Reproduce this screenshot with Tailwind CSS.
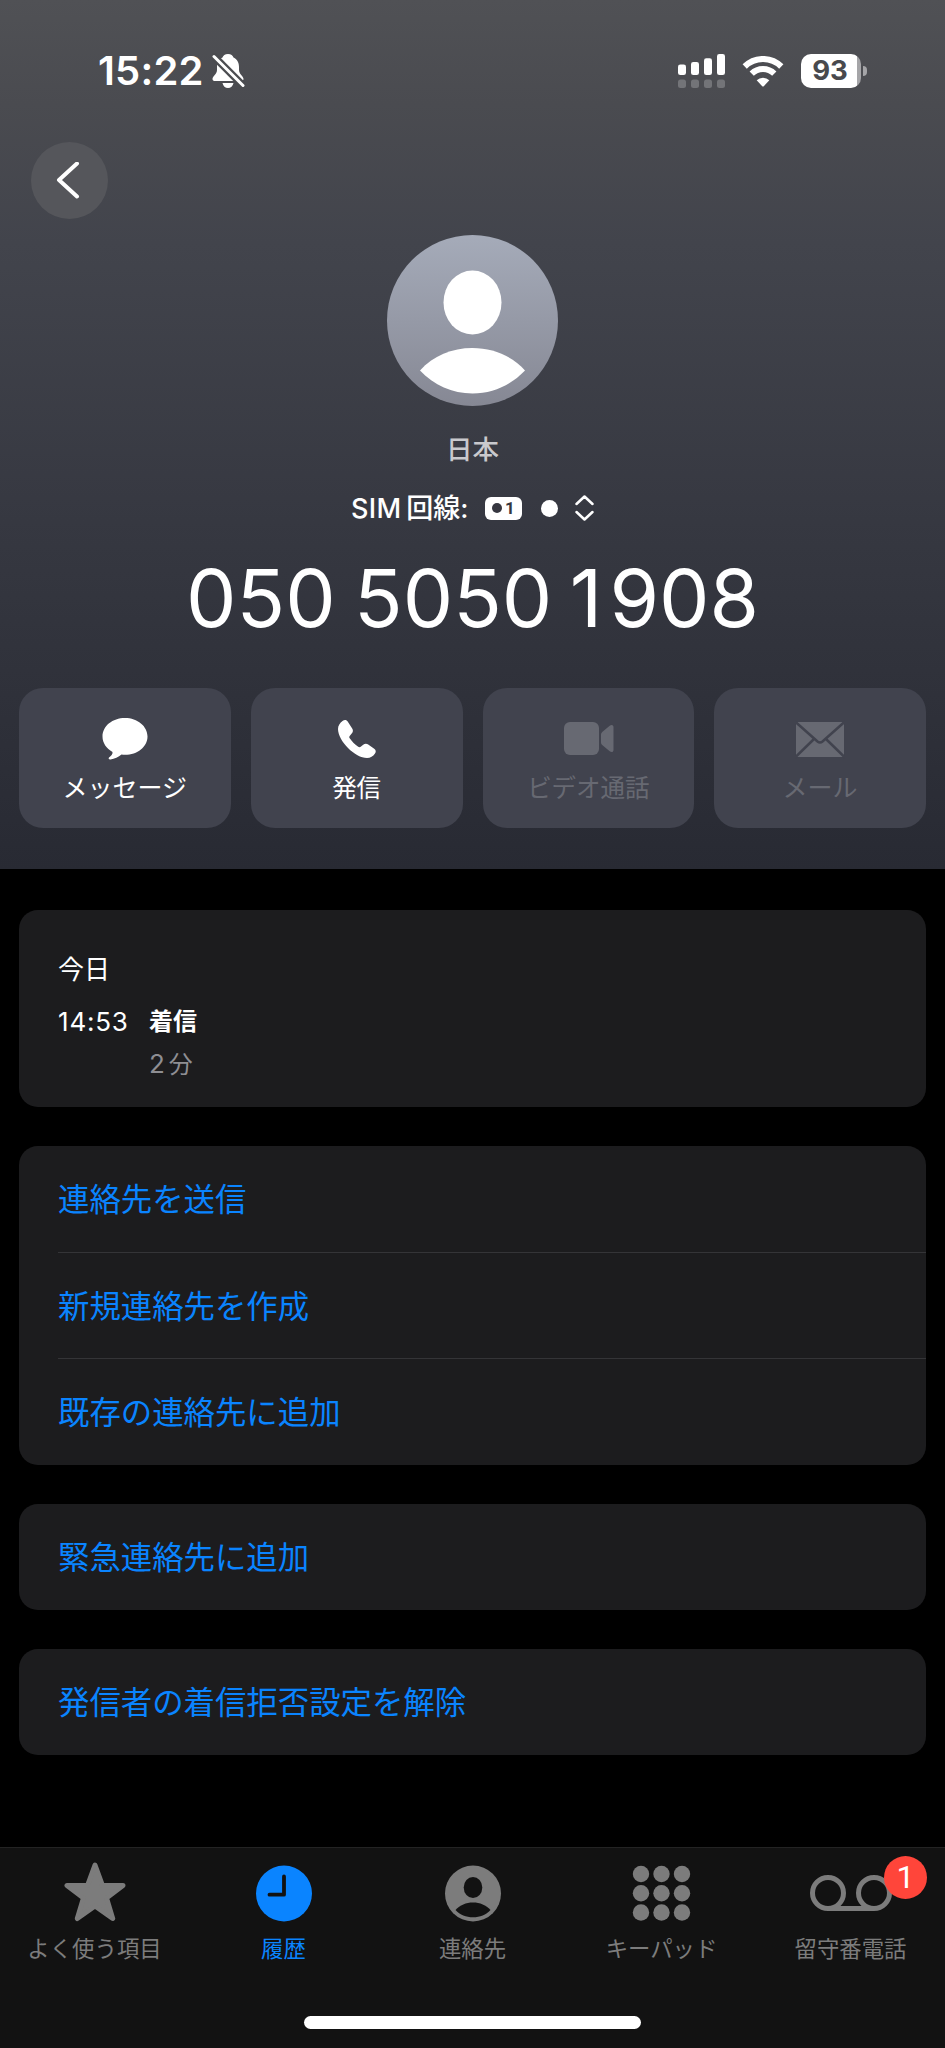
<!DOCTYPE html>
<html lang="ja">
<head>
    <meta charset="UTF-8">
    <meta name="viewport" content="width=device-width, initial-scale=1.0">
    <title>履歴</title>
    <script src="https://cdn.jsdelivr.net/npm/@tailwindcss/browser@4"></script>
</head>
<body class="bg-black text-white font-['Inter','Noto_Sans_CJK_JP',sans-serif]">
<div class="w-[945px] h-[2048px] flex flex-col overflow-hidden">

    <!-- ヘッダー -->
    <header class="h-[869px] shrink-0 flex flex-col bg-[linear-gradient(to_bottom,#505155_0%,#4a4b50_12%,#42444c_28%,#363841_60%,#282a33_100%)]">
        <!-- ステータスバー -->
        <div class="h-[142px] shrink-0 flex items-center justify-between pl-[98px] pr-[78px]">
            <div class="flex items-center gap-[8px]">
                <span class="w-[106px] text-[40px] leading-none font-semibold tracking-[0.200px] whitespace-nowrap">15:22</span>
                <svg class="w-[33px] h-[36px]" viewBox="0 0 33 36" fill="none">
                    <path fill="#fff" d="M16 1c-3 0-5 1.700-5.500 3.500C6.500 6.500 5 10 5 14v3c0 4-4.500 6.500-4.500 9 0 1.300.8 2 2 2h27c1.200 0 2-.7 2-2 0-2.500-4.500-5-4.500-9v-3c0-4-1.500-7.500-5.500-9.500C21 2.700 19 1 16 1ZM10.500 30h11c-.6 3-2.700 5-5.500 5s-4.900-2-5.500-5Z"/>
                    <path stroke="#4b4c50" stroke-width="7.500" d="M-1 .5 34 35.500"/>
                    <path stroke="#fff" stroke-width="3" stroke-linecap="round" d="m2 3.500 29 29"/>
                </svg>
            </div>
            <div class="flex items-center">
                <svg class="w-[48px] h-[34px]" viewBox="0 0 48 34">
                    <g fill="#fff">
                        <rect x="0" y="10.500" width="8" height="10.500" rx="2.300"/>
                        <rect x="13" y="8" width="8" height="13" rx="2.300"/>
                        <rect x="26" y="4.300" width="8" height="16.700" rx="2.300"/>
                        <rect x="39" y="0" width="8" height="21" rx="2.300"/>
                    </g>
                    <g fill="#737478">
                        <rect x="0" y="25.500" width="8" height="8.500" rx="2.500"/>
                        <rect x="13" y="25.500" width="8" height="8.500" rx="2.500"/>
                        <rect x="26" y="25.500" width="8" height="8.500" rx="2.500"/>
                        <rect x="39" y="25.500" width="8" height="8.500" rx="2.500"/>
                    </g>
                </svg>
                <svg class="ml-[16px] w-[42px] h-[31px]" viewBox="0 0 42 31" fill="none">
                    <path stroke="#fff" stroke-width="6" d="M2.700 10.500a26 26 0 0 1 36.600 0"/>
                    <path stroke="#fff" stroke-width="6" d="M9.700 17.700a16 16 0 0 1 22.600 0"/>
                    <path fill="#fff" d="M14.700 24.300a9 9 0 0 1 12.600 0L22 29.900q-1 1-2 0Z"/>
                </svg>
                <div class="ml-[17px] w-[60px] h-[34px] rounded-[10px] bg-linear-to-r from-white from-[93%] to-[#a5a5a8] to-[93%] flex items-center justify-center text-[27.500px] leading-none font-bold text-[#48494d] pr-[2px]">93</div>
                <div class="ml-[2px] w-[4px] h-[10px] rounded-r-full bg-[#a5a5a8]"></div>
            </div>
        </div>

        <!-- 戻るボタン -->
        <button class="ml-[31px] size-[77px] shrink-0 rounded-full bg-[#55565b] flex items-center justify-center">
            <svg class="w-[24px] h-[38px] mr-[4px]" viewBox="0 0 24 38" fill="none" stroke="#fff" stroke-width="4" stroke-linecap="round" stroke-linejoin="round">
                <path d="M21 1.500 3 18l18 16.500"/>
            </svg>
        </button>

        <!-- 連絡先 -->
        <div class="mt-[16px] flex flex-col items-center">
            <svg class="size-[171px]" viewBox="0 0 171 171">
                <defs>
                    <linearGradient id="avatar" x1="0" y1="0" x2="0" y2="1">
                        <stop offset="0" stop-color="#a5abb9"/>
                        <stop offset="1" stop-color="#868894"/>
                    </linearGradient>
                </defs>
                <circle cx="85.500" cy="85.500" r="85.500" fill="url(#avatar)"/>
                <ellipse cx="85.500" cy="67.500" rx="29" ry="32" fill="#fff"/>
                <path fill="#fff" d="M33 135.500C46 121 65 113 85.500 113s39.500 8 52.500 22.500C124 150 106 158.500 85.500 158.500S47 150 33 135.500Z"/>
            </svg>
            <p class="mt-[23px] h-[40px] leading-[40px] text-[26.500px] font-medium text-[#c9c9cd]">日本</p>
            <div class="mt-[19px] h-[40px] flex items-center text-[27px] font-medium">
                <span class="w-[118px] leading-[41px] whitespace-nowrap"><span class="tracking-[0.300px]">SIM</span><span class="ml-[5px]">回線:</span></span>
                <span class="ml-[16px] w-[37px] h-[23px] rounded-[6px] bg-white flex items-center justify-center gap-[3px] font-[Roboto,sans-serif] text-[17px] leading-none font-bold text-[#363740]">
                    <span class="size-[10px] rounded-full bg-[#363740]"></span>1
                </span>
                <span class="ml-[19px] size-[17px] rounded-full bg-white"></span>
                <svg class="ml-[17px] w-[19px] h-[26px]" viewBox="0 0 19 26" fill="none" stroke="#fff" stroke-width="2.500" stroke-linecap="round" stroke-linejoin="round">
                    <path d="m1.500 9 8-7.500 8 7.500M1.500 17l8 7.500 8-7.500"/>
                </svg>
            </div>
            <p class="mt-[24px] h-[90px] leading-[91px] text-[80px] [word-spacing:-4px] whitespace-nowrap">050 5050 <span class="-ml-[1px] mr-[7px]">1</span>908</p>
        </div>

        <!-- アクション -->
        <div class="mt-[46px] px-[19px] grid grid-cols-4 gap-[20px] text-[25px]">
            <button class="h-[140px] rounded-[24px] bg-[#41434e] flex flex-col items-center pt-[28px]">
                <svg class="w-[46px] h-[46px]" viewBox="0 0 46 46" fill="#fff">
                    <path d="M23 2C10.500 2 .5 10 .5 20.500c0 6.500 4 12 10 15.500.5 2-1.500 4-3.500 5.500-1 1 0 2.300 1.500 2 4-.5 8-2.500 11-5 1.200.3 2.300.3 3.500.3 12.500 0 22.500-8 22.500-18.300S35.500 2 23 2Z"/>
                </svg>
                <span class="leading-[53px]">メッセージ</span>
            </button>
            <button class="h-[140px] rounded-[24px] bg-[#41434e] flex flex-col items-center pt-[28px]">
                <svg class="w-[46px] h-[46px]" viewBox="0 0 46 46" fill="#fff">
                    <path d="M8.500 5C6 7 4 9.500 4 13c0 6 4.500 13.500 10 19 6 6 13 10 19 10 3.500 0 6-1.700 8-4.500 1.200-1.700 1-3.500-.8-4.800l-6-4.200c-1.700-1.200-3.500-1-5 .3l-2.500 2c-.8.6-1.700.6-2.500 0-3-2-6.500-5.500-8.500-8.500-.6-.8-.5-1.700.2-2.500l2-2.500c1.200-1.500 1.400-3.200.3-4.900l-4.200-6.500C12.500 3.600 10.500 3.500 8.500 5Z"/>
                </svg>
                <span class="leading-[53px] text-[24.500px]">発信</span>
            </button>
            <button class="h-[140px] rounded-[24px] bg-[#41434e] text-[#676972] flex flex-col items-center pt-[28px]">
                <svg class="ml-[2px] w-[50px] h-[46px]" viewBox="0 0 50 46" fill="currentColor">
                    <rect x="0" y="6" width="35" height="33" rx="6"/>
                    <path d="M37 18.500q0-1.500 1.200-2.500l7.500-6.300C47.500 8.300 49.500 9 49.500 11v23c0 2-2 2.700-3.800 1.300L38.200 29Q37 28 37 26.500Z"/>
                </svg>
                <span class="leading-[53px] text-[24.500px]">ビデオ通話</span>
            </button>
            <button class="h-[140px] rounded-[24px] bg-[#41434e] text-[#676972] flex flex-col items-center pt-[28px]">
                <svg class="w-[50px] h-[46px]" viewBox="0 0 50 46">
                    <rect x="1" y="6" width="48" height="35" rx="2" fill="currentColor"/>
                    <path d="m0 5.500 22.500 20q2.500 2 5 0L50 5.500M0 41.500l18.500-18M50 41.500l-18.500-18" fill="none" stroke="#41434e" stroke-width="2.500"/>
                </svg>
                <span class="leading-[53px]">メール</span>
            </button>
        </div>
    </header>

    <!-- 本文 -->
    <main class="h-[978px] shrink-0 px-[19px] pt-[41px] flex flex-col gap-[39px]">
        <section class="h-[197px] rounded-[19px] bg-[#1c1c1e] pl-[39px] pt-[40px]">
            <h2 class="h-[40px] leading-[40px] text-[26px]">今日</h2>
            <div class="mt-[12px] flex text-[24px] leading-[40px]">
                <span class="w-[91px] text-[26px] tracking-[0.800px]">14:53</span>
                <div>
                    <p class="font-bold">着信</p>
                    <p class="mt-[2px] text-[#8e8e93]"><span class="text-[26px]">2</span><span class="ml-[4px]">分</span></p>
                </div>
            </div>
        </section>

        <section class="rounded-[19px] bg-[#1c1c1e] pl-[39px] text-[31.400px] text-[#0a84ff]">
            <div class="h-[107px] leading-[108px] border-b border-[#343437]">連絡先を送信</div>
            <div class="h-[106px] leading-[108px] border-b border-[#343437]">新規連絡先を作成</div>
            <div class="h-[106px] leading-[108px]">既存の連絡先に追加</div>
        </section>

        <section class="h-[106px] rounded-[19px] bg-[#1c1c1e] pl-[39px] text-[31.400px] leading-[108px] text-[#0a84ff]">緊急連絡先に追加</section>

        <section class="h-[106px] rounded-[19px] bg-[#1c1c1e] pl-[39px] text-[31.400px] leading-[108px] text-[#0a84ff]">発信者の着信拒否設定を解除</section>
    </main>

    <!-- タブバー -->
    <footer class="h-[201px] shrink-0 bg-[#121212] border-t border-[#232323] flex flex-col items-center">
        <nav class="w-full grid grid-cols-5 text-[22.400px] text-[#7c7c7c]">
            <a class="flex flex-col items-center pt-[14px]">
                <svg class="w-[64px] h-[62px]" viewBox="0 0 64 62" fill="currentColor" stroke="currentColor" stroke-width="5" stroke-linejoin="round">
                    <path d="m32 3 7.500 20.500H60L43.500 36l6.200 20.500L32 44 14.300 56.500 20.500 36 4 23.500h20.500Z"/>
                </svg>
                <span class="mt-[6px] leading-[38px]">よく使う項目</span>
            </a>
            <a class="flex flex-col items-center pt-[14px] text-[#0a84ff]">
                <svg class="w-[64px] h-[62px]" viewBox="0 0 64 62">
                    <circle cx="32" cy="31.500" r="28" fill="currentColor"/>
                    <path d="M32 14.500v18.200H17.500" fill="none" stroke="#121212" stroke-width="3.800" stroke-linecap="round" stroke-linejoin="round"/>
                </svg>
                <span class="mt-[6px] leading-[38px]">履歴</span>
            </a>
            <a class="flex flex-col items-center pt-[14px]">
                <svg class="w-[64px] h-[62px]" viewBox="0 0 64 62">
                    <circle cx="32" cy="31.500" r="28" fill="currentColor"/>
                    <ellipse cx="32" cy="25.500" rx="9.300" ry="10.500" fill="#121212"/>
                    <path fill="#121212" d="M14.500 48c4.500-5 10.500-7.500 17.500-7.500S45 43 49.500 48C45 52.800 39 55.300 32 55.300S19 52.800 14.500 48Z"/>
                </svg>
                <span class="mt-[6px] leading-[38px]">連絡先</span>
            </a>
            <a class="flex flex-col items-center pt-[14px]">
                <svg class="w-[64px] h-[62px]" viewBox="0 0 64 62" fill="currentColor">
                    <circle cx="11" cy="12" r="8.200"/><circle cx="31.500" cy="12" r="8.200"/><circle cx="52" cy="12" r="8.200"/>
                    <circle cx="11" cy="31.200" r="8.200"/><circle cx="31.500" cy="31.200" r="8.200"/><circle cx="52" cy="31.200" r="8.200"/>
                    <circle cx="11" cy="50.500" r="8.200"/><circle cx="31.500" cy="50.500" r="8.200"/><circle cx="52" cy="50.500" r="8.200"/>
                </svg>
                <span class="mt-[6px] leading-[38px]">キーパッド</span>
            </a>
            <a class="relative flex flex-col items-center pt-[14px]">
                <svg class="w-[84px] h-[62px]" viewBox="0 0 84 62" fill="none" stroke="currentColor" stroke-width="5">
                    <circle cx="19" cy="31" r="15.500"/>
                    <circle cx="65" cy="31" r="15.500"/>
                    <path d="M19 46.500h46"/>
                </svg>
                <span class="mt-[6px] leading-[38px]">留守番電話</span>
                <span class="absolute top-[8px] right-[18px] size-[43px] rounded-full bg-[#ff453a] text-white font-[Roboto,sans-serif] text-[32px] leading-[43px] text-center">1</span>
            </a>
        </nav>
        <div class="mt-[48px] w-[337px] h-[13px] rounded-full bg-white"></div>
    </footer>
</div>
</body>
</html>
